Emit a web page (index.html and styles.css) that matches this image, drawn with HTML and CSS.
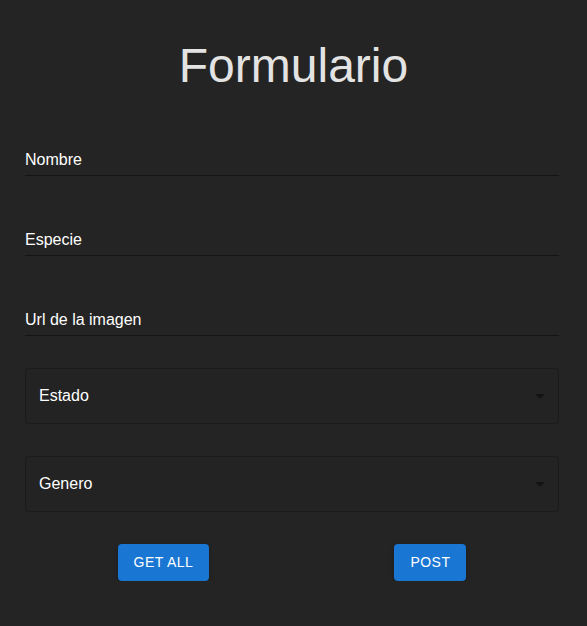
FILE: index.html
```html
<!DOCTYPE html>
<html lang="es">
<head>
<meta charset="utf-8">
<title>Formulario</title>
<link rel="stylesheet" href="styles.css">
</head>
<body>
<main class="page">
  <h1 class="title">Formulario</h1>
  <form class="form">
    <div class="field"><span class="field-label">Nombre</span></div>
    <div class="field"><span class="field-label">Especie</span></div>
    <div class="field"><span class="field-label">Url de la imagen</span></div>
    <div class="select">
      <span class="select-label">Estado</span>
      <svg class="select-icon" viewBox="0 0 24 24" width="24" height="24" aria-hidden="true"><path d="M7 10l5 5 5-5z"/></svg>
    </div>
    <div class="select">
      <span class="select-label">Genero</span>
      <svg class="select-icon" viewBox="0 0 24 24" width="24" height="24" aria-hidden="true"><path d="M7 10l5 5 5-5z"/></svg>
    </div>
    <div class="actions">
      <button type="button" class="btn">Get all</button>
      <button type="button" class="btn">Post</button>
    </div>
  </form>
</main>
</body>
</html>
```

FILE: styles.css
```css
html, body {
  margin: 0;
  padding: 0;
  background: #242424;
  font-family: "Liberation Sans", Arial, Helvetica, sans-serif;
}

.page {
  padding: 38px 28px 0 25px;
}

.title {
  margin: 0;
  font-size: 48px;
  line-height: 56px;
  font-weight: 400;
  text-align: center;
  color: #e3e3e3;
  padding-left: 3px;
}

.form {
  display: flex;
  flex-direction: column;
  gap: 32px;
  margin-top: 34px;
}

.field {
  height: 48px;
  box-sizing: border-box;
  padding-top: 20px;
  border-bottom: 1px solid #151515;
}

.field-label {
  display: block;
  font-size: 16px;
  line-height: 23px;
  color: #ffffff;
}

.select {
  height: 56px;
  box-sizing: border-box;
  border: 1px solid #1b1b1b;
  border-radius: 4px;
  background: #232323;
  padding: 0 6px 0 13px;
  display: flex;
  align-items: center;
  justify-content: space-between;
}

.select-label {
  font-size: 16px;
  line-height: 23px;
  color: #ffffff;
  padding-bottom: 2px;
}

.select-icon {
  display: block;
  fill: #141414;
  margin-top: -1px;
}

.actions {
  display: flex;
  justify-content: space-around;
}

.btn {
  font-family: "Liberation Sans", Arial, Helvetica, sans-serif;
  font-size: 14px;
  font-weight: 500;
  line-height: 24.5px;
  letter-spacing: 0.45px;
  text-transform: uppercase;
  color: #ffffff;
  background: #1976d2;
  border: 0;
  border-radius: 4px;
  padding: 6px 16px;
  box-shadow: 0 3px 1px -2px rgba(0,0,0,0.2), 0 2px 2px 0 rgba(0,0,0,0.14), 0 1px 5px 0 rgba(0,0,0,0.12);
  cursor: pointer;
}
```
